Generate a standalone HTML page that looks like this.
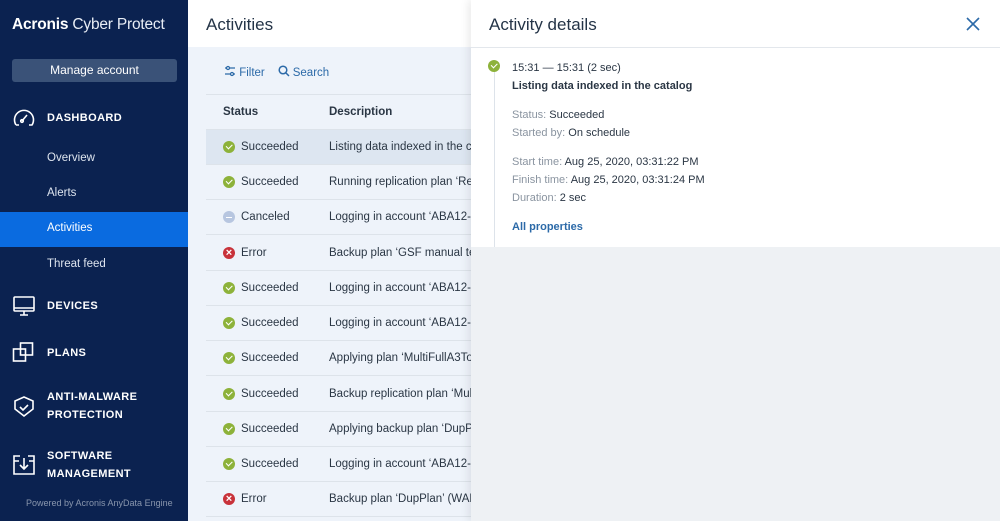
<!DOCTYPE html>
<html><head><meta charset="utf-8"><style>
*{margin:0;padding:0;box-sizing:border-box}
body{width:1000px;height:521px;overflow:hidden;font-family:"Liberation Sans",sans-serif;position:relative;background:#eef3fa}
.sb{position:absolute;left:0;top:0;width:188px;height:521px;background:#0b2250;color:#fff}
.logo{position:absolute;left:12px;top:16px;font-size:15.5px;letter-spacing:-0.2px;white-space:nowrap}
.btn{position:absolute;left:12px;top:59px;width:165px;height:23px;background:#3a5278;border-radius:3px;font-size:12px;text-align:center;line-height:23px;color:#fff}
.sec{position:absolute;left:47px;font-size:11px;font-weight:bold;letter-spacing:0.4px;line-height:18px}
.sub{position:absolute;left:47px;font-size:11.5px;color:#dde4ee}
.act{position:absolute;left:0;top:212px;width:188px;height:35px;background:#0a6be0}
.ic{position:absolute;left:12px}
.pw{position:absolute;left:26px;top:498px;font-size:9px;color:#8996ad}
.top{position:absolute;left:188px;top:0;width:812px;height:47px;background:#fff}
.h1{position:absolute;left:206px;top:15px;font-size:17px;color:#243447}
.tb{position:absolute;left:224px;top:65px;font-size:11.5px;color:#2c6aa8}
.row{position:absolute;left:206px;width:265px;height:35px;border-bottom:1px solid #dde3ea;font-size:11.5px;color:#2a3644;line-height:35px}
.row .s{position:absolute;left:35px}.row .d{position:absolute;left:123px;white-space:nowrap}
.dot{position:absolute;left:17px;top:11px;width:12px;height:12px;border-radius:50%}
.g{background:#8db23a}.r{background:#c8323a}.c{background:#b7c6e0}
.g::after{content:"";position:absolute;left:3px;top:3px;width:5px;height:2.5px;border-left:1.5px solid #fff;border-bottom:1.5px solid #fff;transform:rotate(-45deg)}
.r::after{content:"×";position:absolute;left:0;top:0;width:12px;line-height:12px;text-align:center;color:#fff;font-size:11px;font-weight:bold;font-style:normal}
.c::after{content:"";position:absolute;left:3px;top:5.5px;width:6px;height:1.5px;background:#fff}
.panel{position:absolute;left:471px;top:0;width:529px;height:521px;background:#eef1f4;box-shadow:-3px 0 8px rgba(0,0,0,.08)}
.pt{position:absolute;left:0;top:0;width:529px;height:247px;background:#fff}
.pt .hd{position:absolute;left:0;top:0;width:529px;height:48px;border-bottom:1px solid #e3e7ec}
.t{position:absolute;font-size:11px;color:#2a3644}
.l{color:#8a94a0}
</style></head><body>
<div class="sb">
<div class="logo"><span style="font-weight:bold">Acronis</span> <span style="color:#e8edf5">Cyber Protect</span></div>
<div class="btn">Manage account</div>
<svg class="ic" style="top:106px" width="24" height="24" viewBox="0 0 24 24" fill="none" stroke="#fff" stroke-width="1.6"><path d="M4 19 A9.5 9.5 0 1 1 20 19 L17 19 M4 19 L7 19"/><path d="M10 15 L15 9"/><circle cx="10" cy="15" r="1.3"/></svg>
<div class="sec" style="top:109px">DASHBOARD</div>
<div class="sub" style="top:152px">Overview</div>
<div class="sub" style="top:187px">Alerts</div>
<div class="act"></div>
<div class="sub" style="top:222px;color:#fff">Activities</div>
<div class="sub" style="top:258px">Threat feed</div>
<svg class="ic" style="top:294px" width="24" height="24" viewBox="0 0 24 24" fill="none" stroke="#fff" stroke-width="1.6"><rect x="2" y="3" width="20" height="14" rx="1"/><path d="M2 14h20M12 17v4M8 21h8"/></svg>
<div class="sec" style="top:297px">DEVICES</div>
<svg class="ic" style="top:341px" width="24" height="24" viewBox="0 0 24 24" fill="none" stroke="#fff" stroke-width="1.6"><rect x="1.5" y="8" width="12" height="12"/><rect x="8.5" y="2" width="12" height="12"/></svg>
<div class="sec" style="top:344px">PLANS</div>
<svg class="ic" style="top:395px" width="24" height="24" viewBox="0 0 24 24" fill="none" stroke="#fff" stroke-width="1.6"><path d="M12 2 L21 6 V14 L12 21 L3 14 V6 Z"/><path d="M8 12 l3 3 l5-5"/></svg>
<div class="sec" style="top:388px">ANTI-MALWARE<br>PROTECTION</div>
<svg class="ic" style="top:453px" width="24" height="24" viewBox="0 0 24 24" fill="none" stroke="#fff" stroke-width="1.6"><path d="M8 3H2v18h20V3h-6"/><path d="M2 8h5M17 8h5M12 5v11M8 12l4 4 4-4"/></svg>
<div class="sec" style="top:447px">SOFTWARE<br>MANAGEMENT</div>
<div class="pw">Powered by Acronis AnyData Engine</div>
</div>
<div class="top"></div>
<div class="h1">Activities</div>
<div class="tb"><svg width="12" height="12" viewBox="0 0 12 12" fill="none" stroke="#2c6aa8" stroke-width="1.3" style="vertical-align:-1px"><path d="M1 3h10M1 9h10"/><circle cx="4" cy="3" r="1.5" fill="#fff"/><circle cx="8" cy="9" r="1.5" fill="#fff"/></svg> Filter &nbsp;&nbsp;&nbsp;<svg width="12" height="12" viewBox="0 0 12 12" fill="none" stroke="#2c6aa8" stroke-width="1.5" style="vertical-align:-1px"><circle cx="5" cy="5" r="3.8"/><path d="M8 8l3 3"/></svg> Search</div>
<div style="position:absolute;left:206px;top:94px;width:265px;border-top:1px solid #dde3ea"></div>
<div class="row" style="top:95px;font-weight:bold"><span style="position:absolute;left:17px">Status</span><span class="d">Description</span></div>
<div class="row" style="top:130px;background:#dde6f1"><i class="dot g"></i><span class="s">Succeeded</span><span class="d">Listing data indexed in the catalog</span></div>
<div class="row" style="top:165px"><i class="dot g"></i><span class="s">Succeeded</span><span class="d">Running replication plan ‘Replication’</span></div>
<div class="row" style="top:200px"><i class="dot c"></i><span class="s">Canceled</span><span class="d">Logging in account ‘ABA12-AMS’</span></div>
<div class="row" style="top:236px"><i class="dot r"></i><span class="s">Error</span><span class="d">Backup plan ‘GSF manual test’</span></div>
<div class="row" style="top:271px"><i class="dot g"></i><span class="s">Succeeded</span><span class="d">Logging in account ‘ABA12-AMS’</span></div>
<div class="row" style="top:306px"><i class="dot g"></i><span class="s">Succeeded</span><span class="d">Logging in account ‘ABA12-AMS’</span></div>
<div class="row" style="top:341px"><i class="dot g"></i><span class="s">Succeeded</span><span class="d">Applying plan ‘MultiFullA3ToCloud’</span></div>
<div class="row" style="top:377px"><i class="dot g"></i><span class="s">Succeeded</span><span class="d">Backup replication plan ‘MultiRep’</span></div>
<div class="row" style="top:412px"><i class="dot g"></i><span class="s">Succeeded</span><span class="d">Applying backup plan ‘DupPlan’</span></div>
<div class="row" style="top:447px"><i class="dot g"></i><span class="s">Succeeded</span><span class="d">Logging in account ‘ABA12-AMS’</span></div>
<div class="row" style="top:482px"><i class="dot r"></i><span class="s">Error</span><span class="d">Backup plan ‘DupPlan’ (WANNING)</span></div>
<div class="panel"><div class="pt">
<div class="hd"></div>
<div style="position:absolute;left:18px;top:15px;font-size:17px;color:#243447">Activity details</div>
<svg style="position:absolute;left:495px;top:17px" width="14" height="14" viewBox="0 0 14 14" stroke="#2c6aa8" stroke-width="1.6"><path d="M1 1l12 12M13 1L1 13"/></svg>
<div style="position:absolute;left:23px;top:66px;width:1px;height:181px;background:#dde3ea"></div>
<i class="g" style="position:absolute;left:17px;top:60px;width:12px;height:12px;border-radius:50%"></i>
<div class="t" style="left:41px;top:62px">15:31 — 15:31 (2 sec)</div>
<div class="t" style="left:41px;top:80px;font-weight:bold">Listing data indexed in the catalog</div>
<div class="t" style="left:41px;top:109px"><span class="l">Status:</span> Succeeded</div>
<div class="t" style="left:41px;top:127px"><span class="l">Started by:</span> On schedule</div>
<div class="t" style="left:41px;top:156px"><span class="l">Start time:</span> Aug 25, 2020, 03:31:22 PM</div>
<div class="t" style="left:41px;top:174px"><span class="l">Finish time:</span> Aug 25, 2020, 03:31:24 PM</div>
<div class="t" style="left:41px;top:192px"><span class="l">Duration:</span> 2 sec</div>
<div class="t" style="left:41px;top:221px;color:#2c6aa8;font-weight:bold">All properties</div>
</div></div>
</body></html>
